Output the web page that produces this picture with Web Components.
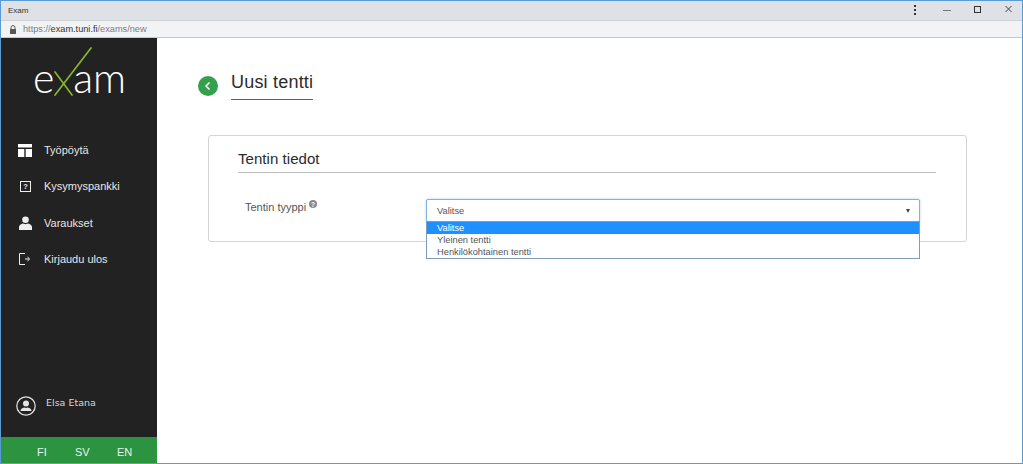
<!DOCTYPE html>
<html lang="fi"><head><meta charset="utf-8"><title>Exam</title>
<style>
html,body{margin:0;height:100%;background:#fff;overflow:hidden}
body{font-family:"Liberation Sans",Arial,sans-serif}
</style></head><body>
<exam-app></exam-app>
<script>
function def(name, html){
  customElements.define(name, class extends HTMLElement{
    constructor(){super();this.attachShadow({mode:'open'}).innerHTML=html;}
  });
}
def('window-chrome',`<style>
:host{display:block;flex:none}
.title{height:19px;background:#dee1e6;display:flex;align-items:center;color:#333;padding-left:7px}
.title span.t{flex:1;font-family:"Liberation Sans",sans-serif;font-size:8px}
.ctl{display:flex;align-items:center;height:19px}
.ctl svg{display:block}
.url{background:#f1f3f4;border-top:1px solid #cfd2d6;border-bottom:1px solid #c8c8c8;box-sizing:border-box;display:flex;align-items:center;padding-left:8px;font:9.200px "Liberation Sans",sans-serif;color:#7b7d80;gap:6px;height:18px}
.url b{font-weight:400;color:#333}
</style>
<div class="title"><span class="t">Exam</span>
<div class="ctl">
<svg width="120" height="19" viewBox="0 0 120 19">
<g fill="#333"><rect x="12" y="4" width="2" height="2"/><rect x="12" y="8" width="2" height="2"/><rect x="12" y="12" width="2" height="2"/></g>
<rect x="41" y="9" width="8" height="1" fill="#777"/>
<rect x="72.500" y="5.500" width="6" height="6" fill="none" stroke="#333"/>
<path d="M103.500 5l6 6M109.500 5l-6 6" stroke="#444" fill="none"/>
</svg></div></div>
<div class="url"><svg width="8" height="9" viewBox="0 0 8 9"><path d="M2 4V2.600a2 2 0 0 1 4 0V4" fill="none" stroke="#555" stroke-width="1"/><rect x="1" y="4" width="6" height="5" rx=".5" fill="#555"/></svg><span>https://<b>exam.tuni.fi</b>/exams/new</span></div>`);

def('exam-logo',`<style>
:host{display:block;position:relative;font:300 41px Lato,sans-serif;color:#fff}
.w{display:flex;justify-content:center;align-items:baseline;padding-top:11px;line-height:42px;padding-left:1px}
.x{width:19px}
svg{position:absolute;left:52px;top:1px}
</style><div class="w"><span>e</span><span class="x"></span><span>am</span></div>
<svg width="40" height="50" viewBox="0 0 40 50"><path d="M38 1L2 48M2 25L19 48" stroke="#86b52f" stroke-width="1.700" fill="none" stroke-linecap="round"/></svg>`);

def('nav-item',`<style>
:host{display:flex;align-items:center;height:36.300px;font:11px "Liberation Sans",Arial,sans-serif;color:#e6e6e6;padding-left:17px;gap:12px}
.i{width:14px;height:14px;display:flex;align-items:center;justify-content:center;flex:none}
::slotted(svg){display:block}
</style><span class="i"><slot name="icon"></slot></span><slot></slot>`);

def('lang-bar',`<style>
:host{display:flex;flex:none;height:26px;background:#2c9441;color:#e8f3ea;font:11px "Liberation Sans",Arial,sans-serif;align-items:center;padding:3px 0 0 36px;box-sizing:border-box}
span{display:block}
.a{width:38px}.b{width:42px}
</style><span class="a">FI</span><span class="b">SV</span><span>EN</span>`);

def('user-badge',`<style>
:host{display:flex;align-items:center;gap:10px;padding-left:15px;height:20px;color:#d8d8d8;font:9.500px "DejaVu Sans",sans-serif}
span{position:relative;bottom:4px}
svg{display:block;flex:none}
</style><svg width="20" height="20" viewBox="0 0 20 20"><circle cx="10" cy="10" r="9.200" fill="none" stroke="#e6e6e6" stroke-width="1.200"/><circle cx="10" cy="7.500" r="3" fill="#e6e6e6"/><path d="M4.500 15c0-2 1.500-3 3.800-3.500L10 12l1.700-.5c2.300.5 3.800 1.500 3.800 3.500z" fill="#e6e6e6"/></svg><span>Elsa Etana</span>`);

def('side-bar',`<style>
:host{display:flex;flex-direction:column;width:156px;flex:none;background:#222;height:100%}
nav{display:block;margin-top:36px}
.sp{flex:1}
.logo{margin-top:8px;height:50px;display:block}
user-badge{margin-bottom:21px}
</style>
<exam-logo class="logo"></exam-logo>
<nav>
<nav-item><svg slot="icon" width="14" height="13" viewBox="0 0 14 13"><path fill="#fff" d="M0 0h14v3.500H0zM0 5h6.300v8H0zM7.700 5H14v8H7.700z"/></svg>Työpöytä</nav-item>
<nav-item><svg slot="icon" width="11" height="11" viewBox="0 0 11 11"><rect x=".5" y=".5" width="10" height="10" fill="none" stroke="#eee"/><text x="5.500" y="8.300" font-size="7.500" font-weight="700" text-anchor="middle" fill="#eee" font-family="Liberation Sans">?</text></svg>Kysymyspankki</nav-item>
<nav-item><svg slot="icon" width="13" height="14" viewBox="0 0 13 14"><circle cx="6.500" cy="3.800" r="3.300" fill="#eee"/><path d="M0 14v-3c0-2 2-3 4-3.500l2.500.8 2.500-.8c2 .5 4 1.500 4 3.500v3z" fill="#eee"/></svg>Varaukset</nav-item>
<nav-item><svg slot="icon" width="12" height="12" viewBox="0 0 12 12"><path d="M6 .5H.5v11H6M8.500 4l2.200 2-2.200 2M6 6h4" fill="none" stroke="#eee"/></svg>Kirjaudu ulos</nav-item>
</nav>
<div class="sp"></div>
<user-badge></user-badge>
<lang-bar></lang-bar>`);

def('page-title',`<style>
:host{display:flex;align-items:flex-start;gap:13px;font:18px "Liberation Sans",Arial,sans-serif;color:#2b2b2b}
.b{width:20px;height:20px;margin-top:6px;flex:none}
.b svg{display:block}
h1{font:inherit;margin:0;padding:0 0 5px;border-bottom:1px solid #2f7a3d;line-height:24px;letter-spacing:.2px}
</style><span class="b"><svg width="20" height="20" viewBox="0 0 20 20"><circle cx="10" cy="10" r="10" fill="#35a04c"/><path d="M11.500 6.500L8 10l3.500 3.500" fill="none" stroke="#fff" stroke-width="1.500"/></svg></span><h1><slot></slot></h1>`);

def('exam-select',`<style>
:host{display:block;position:relative;width:494px;height:23px;font:9.300px "Liberation Sans",Arial,sans-serif;color:#555}
.box{box-sizing:border-box;height:23px;border:1px solid #7fb2e0;border-radius:2px;box-shadow:0 0 3px rgba(102,175,233,.5);display:flex;align-items:center;padding:0 10px;background:#fff}
.box span{flex:1}
.arrow{width:0;height:0;border:2.500px solid transparent;border-top:4px solid #444;border-bottom:0;margin-right:-1px}
.list{position:absolute;left:0;top:21.500px;width:100%;box-sizing:border-box;border:1px solid #7f9db9;background:#fff;line-height:12px;z-index:2}
.o{padding-left:10px;height:12px}
.o.s{background:#1e90ff;color:#fff}
</style><div class="box"><span>Valitse</span><i class="arrow"></i></div>
<div class="list"><div class="o s">Valitse</div><div class="o">Yleinen tentti</div><div class="o">Henkilökohtainen tentti</div></div>`);

def('info-card',`<style>
:host{display:block;box-sizing:border-box;width:759px;height:107px;border:1px solid #d5d5d5;border-radius:3px;background:#fff;padding:13px 30px 0 29px}
h2{font:400 15px "Liberation Sans",Arial,sans-serif;color:#2b2b2b;margin:0;line-height:20px;height:23px;border-bottom:1px solid #bdbdbd;letter-spacing:.05px}
.row{display:flex;margin-top:26px;padding-left:7px}
label{width:181px;flex:none;font:11px "Liberation Sans",Arial,sans-serif;color:#555;line-height:13px;display:flex;gap:3px;padding-top:0}
label span{display:block;margin-top:0}
label svg{display:block;margin-top:1px}
.lab{display:block}
</style><h2>Tentin tiedot</h2>
<div class="row"><label style="padding-top:0"><span style="padding-top:0;line-height:16px">Tentin tyyppi</span> <svg width="8" height="8" viewBox="0 0 8 8"><circle cx="4" cy="4" r="4" fill="#8a8a8a"/><text x="4" y="6.500" font-size="6.500" font-weight="700" text-anchor="middle" fill="#fff" font-family="Liberation Sans">?</text></svg></label><exam-select></exam-select></div>`);

def('exam-app',`<style>
:host{display:flex;flex-direction:column;box-sizing:border-box;width:1023px;height:464px;border:1px solid #5b9bd5;overflow:hidden}
.main{display:flex;flex:1;min-height:0}
.content{flex:1;padding:32px 0 0 41px;background:#fff}
page-title{margin-bottom:35px}
info-card{margin-left:10px}
</style>
<window-chrome></window-chrome>
<div class="main"><side-bar></side-bar>
<div class="content"><page-title>Uusi tentti</page-title><info-card></info-card></div></div>`);
</script>
</body></html>
